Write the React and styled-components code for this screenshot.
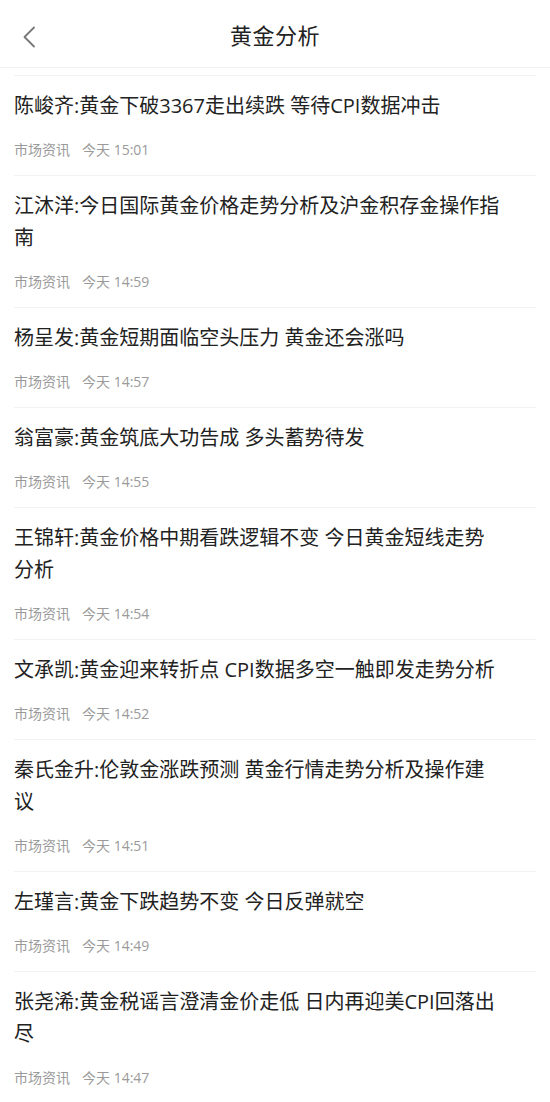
import React from 'react';
import styled, { createGlobalStyle } from 'styled-components';

const news = [
  { id: 1, title: '陈峻齐:黄金下破3367走出续跌 等待CPI数据冲击', source: '市场资讯', time: '今天 15:01' },
  { id: 2, title: '江沐洋:今日国际黄金价格走势分析及沪金积存金操作指南', source: '市场资讯', time: '今天 14:59' },
  { id: 3, title: '杨呈发:黄金短期面临空头压力 黄金还会涨吗', source: '市场资讯', time: '今天 14:57' },
  { id: 4, title: '翁富豪:黄金筑底大功告成 多头蓄势待发', source: '市场资讯', time: '今天 14:55' },
  { id: 5, title: '王锦轩:黄金价格中期看跌逻辑不变 今日黄金短线走势分析', source: '市场资讯', time: '今天 14:54' },
  { id: 6, title: '文承凯:黄金迎来转折点 CPI数据多空一触即发走势分析', source: '市场资讯', time: '今天 14:52' },
  { id: 7, title: '秦氏金升:伦敦金涨跌预测 黄金行情走势分析及操作建议', source: '市场资讯', time: '今天 14:51' },
  { id: 8, title: '左瑾言:黄金下跌趋势不变 今日反弹就空', source: '市场资讯', time: '今天 14:49' },
  { id: 9, title: '张尧浠:黄金税谣言澄清金价走低 日内再迎美CPI回落出尽', source: '市场资讯', time: '今天 14:47' },
];

const App = () => {
  return (
    <>
      <GlobalStyle />
      <Page>
        <Header>
          <BackButton aria-label="返回">
            <svg width="14" height="22" viewBox="0 0 14 22" fill="none">
              <path d="M12 1.5L2.5 11L12 20.5" stroke="#777" strokeWidth="1.8" strokeLinecap="round" strokeLinejoin="round" />
            </svg>
          </BackButton>
          <HeaderTitle>黄金分析</HeaderTitle>
        </Header>
        <NewsList>
          {news.map((item) => (
            <NewsItem key={item.id}>
              <NewsTitle>{item.title}</NewsTitle>
              <NewsMeta>
                <span>{item.source}</span>
                <span>{item.time}</span>
              </NewsMeta>
            </NewsItem>
          ))}
        </NewsList>
      </Page>
    </>
  );
};

export default App;

const GlobalStyle = createGlobalStyle`
  * {
    box-sizing: border-box;
  }
  body {
    margin: 0;
    background: #fff;
    font-family: 'Open Sans', 'Noto Sans CJK SC', sans-serif;
  }
`;

const Page = styled.div`
  width: 100%;
  min-height: 1102px;
  background: #fff;
`;

const Header = styled.header`
  position: relative;
  display: flex;
  align-items: center;
  justify-content: center;
  height: 68px;
  border-bottom: 1px solid #f0f0f0;
`;

const BackButton = styled.button`
  position: absolute;
  left: 22px;
  top: 26px;
  display: flex;
  padding: 0;
  border: none;
  background: none;
`;

const HeaderTitle = styled.h1`
  margin: 0;
  color: #222;
  font-size: 22px;
  font-weight: 400;
  letter-spacing: 0.5px;
`;

const NewsList = styled.ul`
  list-style: none;
  margin: 0;
  padding: 7px 14px 0;
`;

const NewsItem = styled.li`
  display: flex;
  flex-direction: column;
  padding: 14px 0 15px;
  border-top: 1px solid #f2f2f2;
`;

const NewsTitle = styled.h3`
  margin: 0;
  padding-right: 34px;
  color: #222;
  font-size: 20px;
  font-weight: 400;
  line-height: 32px;
`;

const NewsMeta = styled.div`
  display: flex;
  gap: 12px;
  margin-top: 18px;
  color: #9a9a9a;
  font-size: 14px;
  line-height: 20px;
`;
